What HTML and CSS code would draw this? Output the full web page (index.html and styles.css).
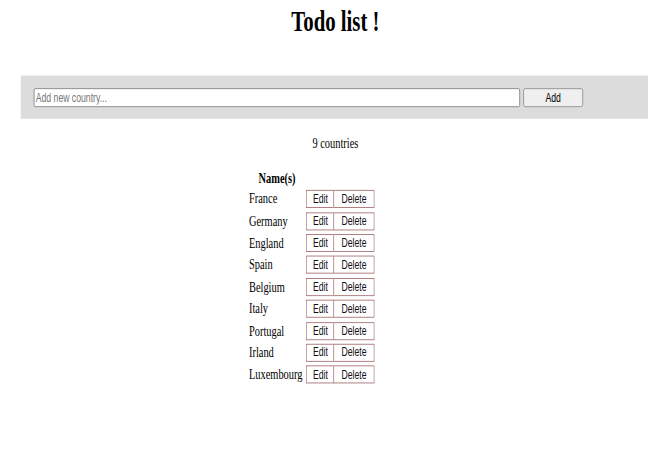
FILE: index.html
```html
<!DOCTYPE html>
<html>
<head>
<meta charset="utf-8">
<title>Todo list</title>
<link rel="stylesheet" href="styles.css">
</head>
<body>
<div class="viewport">
<div class="page">
  <div class="content">
    <h1 class="title">Todo list !</h1>
    <form class="add-bar">
      <input class="add-input" type="text" placeholder="Add new country...">
      <button class="add-btn" type="button">Add</button>
    </form>
    <p class="count">9 countries</p>
    <table class="list">
      <thead>
        <tr><th class="head">Name(s)</th><th></th></tr>
      </thead>
      <tbody>
        <tr><td class="name">France</td><td class="actions"><span class="btns"><button class="btn">Edit</button><button class="btn del">Delete</button></span></td></tr>
        <tr><td class="name">Germany</td><td class="actions"><span class="btns"><button class="btn">Edit</button><button class="btn del">Delete</button></span></td></tr>
        <tr><td class="name">England</td><td class="actions"><span class="btns"><button class="btn">Edit</button><button class="btn del">Delete</button></span></td></tr>
        <tr><td class="name">Spain</td><td class="actions"><span class="btns"><button class="btn">Edit</button><button class="btn del">Delete</button></span></td></tr>
        <tr><td class="name">Belgium</td><td class="actions"><span class="btns"><button class="btn">Edit</button><button class="btn del">Delete</button></span></td></tr>
        <tr><td class="name">Italy</td><td class="actions"><span class="btns"><button class="btn">Edit</button><button class="btn del">Delete</button></span></td></tr>
        <tr><td class="name">Portugal</td><td class="actions"><span class="btns"><button class="btn">Edit</button><button class="btn del">Delete</button></span></td></tr>
        <tr><td class="name">Irland</td><td class="actions"><span class="btns"><button class="btn">Edit</button><button class="btn del">Delete</button></span></td></tr>
        <tr><td class="name">Luxembourg</td><td class="actions"><span class="btns"><button class="btn">Edit</button><button class="btn del">Delete</button></span></td></tr>
      </tbody>
    </table>
  </div>
</div>
</div>
</body>
</html>
```

FILE: styles.css
```css
html, body {
  margin: 0;
  padding: 0;
  background: #ffffff;
  overflow: hidden;
}

.viewport {
  width: 650px;
  height: 453px;
  overflow: hidden;
}

.page {
  width: 1000px;
  height: 503px;
  transform: scale(0.65, 0.9);
  transform-origin: 0 0;
  font-family: "Liberation Serif", "Times New Roman", serif;
  font-size: 16px;
  color: #000;
  padding-top: 5px;
  box-sizing: border-box;
}

.content {
  margin-left: 32px;
  width: 968px;
}

.title {
  margin: 0;
  font-size: 32px;
  line-height: 37px;
  font-weight: bold;
  text-align: center;
}

.add-bar {
  margin: 42px 3px 0 0;
  height: 48px;
  box-sizing: border-box;
  padding: 14px 0 0 20px;
  background: #dcdcdc;
  display: flex;
  align-items: flex-start;
  gap: 5px;
}

.add-input {
  width: 748px;
  height: 21px;
  box-sizing: border-box;
  margin: 0;
  padding: 1px 2px;
  border: 1px solid #767676;
  border-radius: 2px;
  background: #fff;
  font-family: "Liberation Sans", Arial, sans-serif;
  font-size: 13.33px;
  color: #000;
}

.add-input::placeholder {
  color: #757575;
}

.add-btn {
  width: 92px;
  height: 21px;
  box-sizing: border-box;
  margin: 0;
  padding: 1px 6px;
  border: 1px solid #858585;
  border-radius: 3px;
  background: #efefef;
  font-family: "Liberation Sans", Arial, sans-serif;
  font-size: 13.33px;
  color: #000;
}

.count {
  margin: 18px 0 0;
  line-height: 18px;
  text-align: center;
}

.list {
  margin: 18px 0 0 350px;
  border-collapse: collapse;
  border-spacing: 0;
}

.head {
  height: 23px;
  padding: 0 1px;
  font-weight: bold;
  text-align: center;
  vertical-align: middle;
}

.list tbody tr {
  height: 24.4px;
}

.name {
  padding: 0 5px 0 1px;
  vertical-align: middle;
  white-space: nowrap;
}

.actions {
  padding: 0 1px;
  vertical-align: middle;
}

.btns {
  display: flex;
}

.btn {
  height: 20px;
  box-sizing: border-box;
  margin: 0;
  padding: 0 9px;
  border: 1px solid #a87474;
  background: #fff;
  font-family: "Liberation Sans", Arial, sans-serif;
  font-size: 13.33px;
  color: #111;
}

.btn.del {
  border-left: 1px solid #a87474;
  margin-left: -1px;
  padding: 0 11px;
}
```
